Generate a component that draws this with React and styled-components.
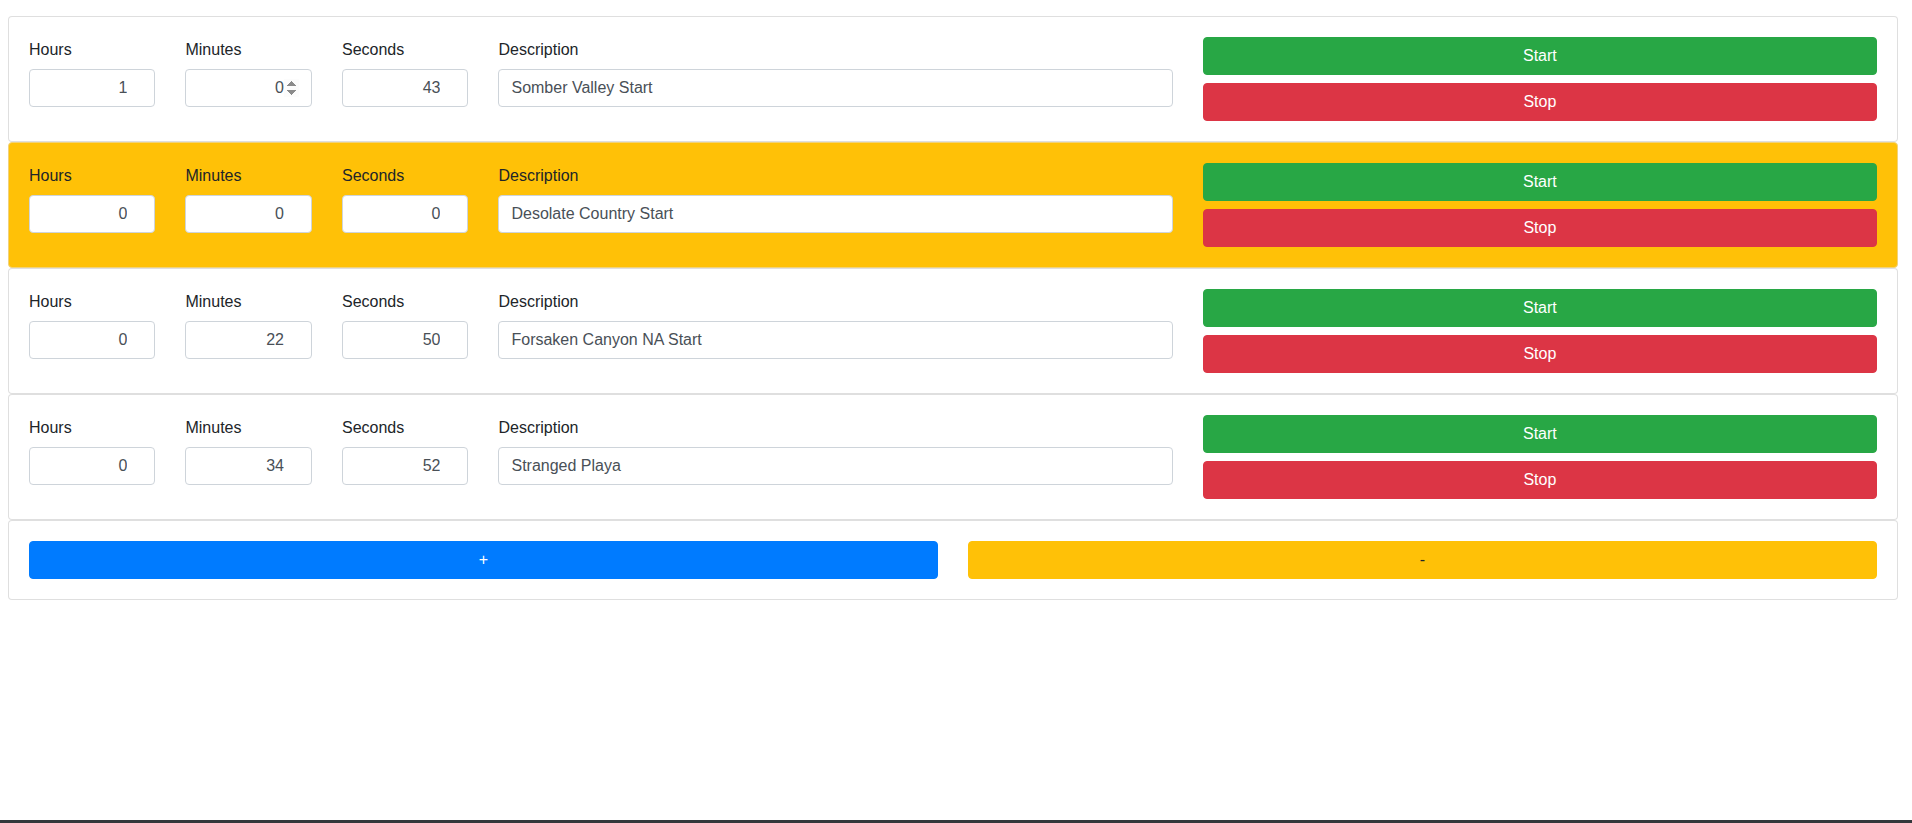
import React from 'react'
import styled, {createGlobalStyle} from 'styled-components';

const GlobalStyle = createGlobalStyle`
  html, body {
    margin: 0;
    padding: 0;
    background: #fff;
  }
  body {
    font-family: "Liberation Sans", Arial, sans-serif;
    font-size: 16px;
    line-height: 1.5;
    color: #212529;
  }
  * {
    box-sizing: border-box;
  }
`;

const Page = styled.div`
  min-height: 100vh;
  display: flex;
  flex-direction: column;
`;

const Content = styled.div`
  flex: 1;
  padding: 16px 14px 0 8px;
`;

const Card = styled.div`
  background: ${props => props.background || '#fff'};
  border: 1px solid ${props => props.border || 'rgba(0, 0, 0, 0.125)'};
  border-radius: 0.25rem;
`;

const CardBody = styled.div`
  padding: 20px;
`;

const Row = styled.div`
  display: flex;
  margin: 0 -15px;
`;

const Col = styled.div`
  padding: 0 15px;
  flex: ${props => props.span ? `0 0 ${(props.span / 12) * 100}%` : '1 1 0'};
  max-width: ${props => props.span ? `${(props.span / 12) * 100}%` : 'none'};
  min-width: 0;
`;

const Label = styled.label`
  display: inline-block;
  margin-top: 1px;
  margin-bottom: 7px;
  color: #212529;
`;

const Input = styled.input`
  display: block;
  width: 100%;
  height: 38px;
  padding: 6px 12px;
  font-family: inherit;
  font-size: 16px;
  line-height: 1.5;
  color: #495057;
  background: #fff;
  border: 1px solid #ced4da;
  border-radius: 0.25rem;
  text-align: ${props => props.type === 'number' ? 'right' : 'left'};
  outline: none;

  &::-webkit-inner-spin-button {
    opacity: ${props => props.$spin ? 1 : 0};
  }
`;

const Button = styled.button`
  display: block;
  width: 100%;
  height: 38px;
  padding: 6px 12px;
  font-family: inherit;
  font-size: 16px;
  line-height: 1.5;
  color: ${props => props.color || '#fff'};
  background: ${props => props.background};
  border: 1px solid ${props => props.background};
  border-radius: 0.25rem;
  text-align: center;

  & + & {
    margin-top: 8px;
  }
`;

const BottomBar = styled.div`
  height: 3px;
  background: #33373b;
`;

const timers = [
  {h: 1, m: 0, s: 43, desc: 'Somber Valley Start', spin: true},
  {h: 0, m: 0, s: 0, desc: 'Desolate Country Start', active: true},
  {h: 0, m: 22, s: 50, desc: 'Forsaken Canyon NA Start'},
  {h: 0, m: 34, s: 52, desc: 'Stranged Playa'},
]

const TimerCard = ({timer}) => (
  <Card
    background={timer.active ? '#ffc107' : '#fff'}
    border={timer.active ? '#f1d27a' : undefined}
  >
    <CardBody>
      <Row>
        <Col span={1}>
          <Label>Hours</Label>
          <Input type="number" defaultValue={timer.h}/>
        </Col>
        <Col span={1}>
          <Label>Minutes</Label>
          <Input type="number" defaultValue={timer.m} $spin={timer.spin}/>
        </Col>
        <Col span={1}>
          <Label>Seconds</Label>
          <Input type="number" defaultValue={timer.s}/>
        </Col>
        <Col>
          <Label>Description</Label>
          <Input type="text" defaultValue={timer.desc}/>
        </Col>
        <Col>
          <Button background="#28a745">Start</Button>
          <Button background="#dc3545">Stop</Button>
        </Col>
      </Row>
    </CardBody>
  </Card>
)

const App = () => {
  return (
    <Page>
      <GlobalStyle/>
      <Content>
        {timers.map((t, i) => <TimerCard key={i} timer={t}/>)}
        <Card>
          <CardBody>
            <Row>
              <Col>
                <Button background="#007bff">+</Button>
              </Col>
              <Col>
                <Button background="#ffc107" color="#212529">-</Button>
              </Col>
            </Row>
          </CardBody>
        </Card>
      </Content>
      <BottomBar/>
    </Page>
  )
}

export default App;
